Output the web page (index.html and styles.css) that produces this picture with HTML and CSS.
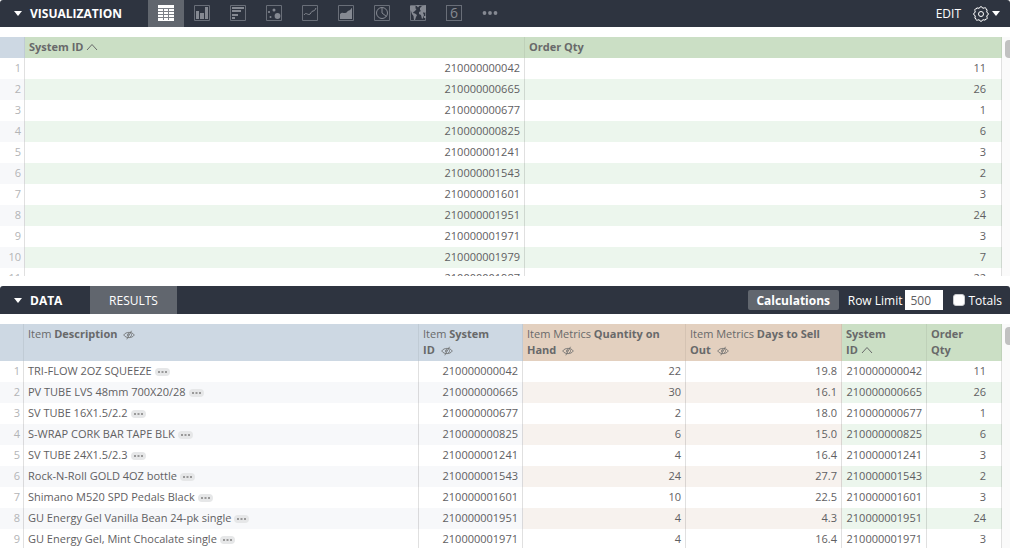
FILE: index.html
```html
<!DOCTYPE html>
<html lang="en">
<head>
    <meta charset="UTF-8">
    <meta name="viewport" content="width=device-width, initial-scale=1.0">
    <title>Explore</title>
    <link rel="stylesheet" href="styles.css">
</head>
<body>
    <svg class="defs" width="0" height="0">
        <symbol id="caret" viewBox="0 0 8 5"><path d="M0 0h8L4 5z" fill="currentColor"/></symbol>
        <symbol id="sort" viewBox="0 0 12 8"><path d="M1 7l5-5.500 5 5.500" fill="none" stroke="currentColor"/></symbol>
        <symbol id="hidden" viewBox="0 0 12 10">
            <path d="M.7 5C3 1.500 9 1.500 11.300 5C9 8.500 3 8.500.7 5z" fill="none" stroke="currentColor" stroke-width=".8"/>
            <path d="M6 3a2 2 0 0 0-1 3.600z" fill="currentColor"/>
            <path d="M8.500.8L3.800 9.300M8 3.500a2.200 2.200 0 0 1-1 3.500" fill="none" stroke="currentColor" stroke-width=".8"/>
        </symbol>
        <symbol id="dots" viewBox="0 0 15 8"><path d="M3 3h2v2H3zM6.500 3h2v2h-2zM10 3h2v2h-2z" fill="#999"/></symbol>
    </svg>

    <section class="panel visualization">
        <header class="bar">
            <button class="toggle"><svg class="caret"><use href="#caret"/></svg>VISUALIZATION</button>
            <nav class="chart-types">
                <button class="chart active" aria-label="Table">
                    <svg viewBox="0 0 16 16"><path d="M0 0h16v16H0z" fill="#fff"/><path d="M0 3.500h16M0 6.500h16M0 9.500h16M0 12.500h16" stroke="#7c8087"/><path d="M5.500 3v12M10.500 3v12" stroke="#7c8087"/></svg>
                </button>
                <button class="chart" aria-label="Column">
                    <svg viewBox="0 0 16 16"><path class="frame" d="M.5.5h15v15H.5z"/><path d="M2 6h3v8H2zM6 8h4v6H6zM11 2h3v12h-3z"/></svg>
                </button>
                <button class="chart" aria-label="Bar">
                    <svg viewBox="0 0 16 16"><path class="frame" d="M.5.5h15v15H.5z"/><path d="M2 2h12v2H2zM2 5h9v2H2zM2 9h6v2H2zM2 12h3v2H2z"/></svg>
                </button>
                <button class="chart" aria-label="Scatter">
                    <svg viewBox="0 0 16 16"><path class="frame" d="M.5.5h15v15H.5z"/><circle cx="11.500" cy="11" r="2.900"/><circle cx="8" cy="5" r="1.500"/><circle cx="3" cy="7" r="1.100"/><circle cx="4.500" cy="12" r="1"/></svg>
                </button>
                <button class="chart" aria-label="Line">
                    <svg viewBox="0 0 16 16"><path class="frame" d="M.5.5h15v15H.5z"/><path class="line" d="M2 10C4 7 5 9.500 7 9.500S9 6 11 6s2-1.500 3-3"/></svg>
                </button>
                <button class="chart" aria-label="Area">
                    <svg viewBox="0 0 16 16"><path class="frame" d="M.5.5h15v15H.5z"/><path d="M2 14V9c2-2 3-1 5-1s2-2 4-2.500S13 3 14 3v11z"/></svg>
                </button>
                <button class="chart" aria-label="Pie">
                    <svg viewBox="0 0 16 16"><path class="frame" d="M.5.5h15v15H.5z"/><circle class="line" cx="8" cy="8" r="5.500"/><path class="line" d="M8 2.500V8l4.500 3.500"/></svg>
                </button>
                <button class="chart" aria-label="Map">
                    <svg viewBox="0 0 16 16"><path class="frame" d="M.5.500h15v15H.5z"/><path d="M0 1h5l1 1-1 1 1.500 1L5 6 3.500 7 3 8l2 .5 2 1.500-1 2-1 3H4l-.5-4L2 9 1 6 0 5zM6 0h4L8 2.500zM10 3l2-2 4-1v7l-1.500 1L14 7l-1 1 1 2-1 3-1 1-1-4-2-1V7l2-1-1-1z"/><path d="M14 11h2v2h-2z"/></svg>
                </button>
                <button class="chart" aria-label="Single value"><span class="single">6</span></button>
                <button class="chart" aria-label="More">
                    <svg viewBox="0 0 16 16"><circle cx="2.500" cy="8" r="1.900"/><circle cx="8" cy="8" r="1.900"/><circle cx="13.500" cy="8" r="1.900"/></svg>
                </button>
            </nav>
            <div class="actions">
                <button class="edit">EDIT</button>
                <button class="settings" aria-label="Settings">
                    <svg class="gear" viewBox="0 0 16 16"><path d="M6.200 2.300Q8-1.200 9.800 2.300Q13.600 1 13 3.200Q14.900 3 13.700 6.200Q17.200 8 13.700 9.800Q15 13.600 12.800 13Q13 14.900 9.800 13.700Q8 17.200 6.200 13.700Q2.400 15 3 12.800Q1.100 13 2.300 9.800Q-1.200 8 2.300 6.200Q1 2.400 3.200 3Q3 1.100 6.200 2.300z"/><circle cx="8" cy="8" r="2.500"/></svg>
                    <svg class="caret"><use href="#caret"/></svg>
                </button>
            </div>
        </header>
        <div class="scroller">
            <table class="grid">
                <colgroup><col class="col-viz-index"><col class="col-half"><col></colgroup>
                <thead>
                    <tr><th class="dimension"></th><th class="calc">System ID <svg class="sort"><use href="#sort"/></svg></th><th class="calc">Order Qty</th></tr>
                </thead>
                <tbody>
                    <tr><td class="index">1</td><td class="calc">210000000042</td><td class="calc qty">11</td></tr>
                    <tr><td class="index">2</td><td class="calc">210000000665</td><td class="calc qty">26</td></tr>
                    <tr><td class="index">3</td><td class="calc">210000000677</td><td class="calc qty">1</td></tr>
                    <tr><td class="index">4</td><td class="calc">210000000825</td><td class="calc qty">6</td></tr>
                    <tr><td class="index">5</td><td class="calc">210000001241</td><td class="calc qty">3</td></tr>
                    <tr><td class="index">6</td><td class="calc">210000001543</td><td class="calc qty">2</td></tr>
                    <tr><td class="index">7</td><td class="calc">210000001601</td><td class="calc qty">3</td></tr>
                    <tr><td class="index">8</td><td class="calc">210000001951</td><td class="calc qty">24</td></tr>
                    <tr><td class="index">9</td><td class="calc">210000001971</td><td class="calc qty">3</td></tr>
                    <tr><td class="index">10</td><td class="calc">210000001979</td><td class="calc qty">7</td></tr>
                    <tr><td class="index">11</td><td class="calc">210000001987</td><td class="calc qty">22</td></tr>
                </tbody>
            </table>
            <div class="track"><div class="thumb"></div></div>
        </div>
    </section>

    <section class="panel data">
        <header class="bar">
            <button class="toggle"><svg class="caret"><use href="#caret"/></svg>DATA</button>
            <button class="tab">RESULTS</button>
            <div class="actions">
                <button class="calculations">Calculations</button>
                <label class="limit" for="row-limit">Row Limit</label>
                <input class="limit-box" type="text" id="row-limit" value="500">
                <input class="check" type="checkbox" id="totals">
                <label for="totals">Totals</label>
            </div>
        </header>
        <div class="scroller">
            <table class="grid">
                <colgroup><col class="col-index"><col><col class="col-id"><col class="col-hand"><col class="col-days"><col class="col-calc-id"><col class="col-qty"></colgroup>
                <thead>
                    <tr>
                        <th class="dimension"></th>
                        <th class="dimension"><span>Item</span> Description <svg class="hidden"><use href="#hidden"/></svg></th>
                        <th class="dimension"><span>Item</span> System<br>ID <svg class="hidden"><use href="#hidden"/></svg></th>
                        <th class="measure"><span>Item Metrics</span> Quantity on Hand <svg class="hidden"><use href="#hidden"/></svg></th>
                        <th class="measure"><span>Item Metrics</span> Days to Sell Out <svg class="hidden"><use href="#hidden"/></svg></th>
                        <th class="calc">System<br>ID <svg class="sort"><use href="#sort"/></svg></th>
                        <th class="calc">Order<br>Qty</th>
                    </tr>
                </thead>
                <tbody>
                    <tr><td class="index">1</td><td class="text">TRI-FLOW 2OZ SQUEEZE<button class="more" aria-label="More"><svg><use href="#dots"/></svg></button></td><td>210000000042</td><td class="measure">22</td><td class="measure">19.8</td><td class="calc">210000000042</td><td class="calc qty">11</td></tr>
                    <tr><td class="index">2</td><td class="text">PV TUBE LVS 48mm 700X20/28<button class="more" aria-label="More"><svg><use href="#dots"/></svg></button></td><td>210000000665</td><td class="measure">30</td><td class="measure">16.1</td><td class="calc">210000000665</td><td class="calc qty">26</td></tr>
                    <tr><td class="index">3</td><td class="text">SV TUBE 16X1.5/2.2<button class="more" aria-label="More"><svg><use href="#dots"/></svg></button></td><td>210000000677</td><td class="measure">2</td><td class="measure">18.0</td><td class="calc">210000000677</td><td class="calc qty">1</td></tr>
                    <tr><td class="index">4</td><td class="text">S-WRAP CORK BAR TAPE BLK<button class="more" aria-label="More"><svg><use href="#dots"/></svg></button></td><td>210000000825</td><td class="measure">6</td><td class="measure">15.0</td><td class="calc">210000000825</td><td class="calc qty">6</td></tr>
                    <tr><td class="index">5</td><td class="text">SV TUBE 24X1.5/2.3<button class="more" aria-label="More"><svg><use href="#dots"/></svg></button></td><td>210000001241</td><td class="measure">4</td><td class="measure">16.4</td><td class="calc">210000001241</td><td class="calc qty">3</td></tr>
                    <tr><td class="index">6</td><td class="text">Rock-N-Roll GOLD 4OZ bottle<button class="more" aria-label="More"><svg><use href="#dots"/></svg></button></td><td>210000001543</td><td class="measure">24</td><td class="measure">27.7</td><td class="calc">210000001543</td><td class="calc qty">2</td></tr>
                    <tr><td class="index">7</td><td class="text">Shimano M520 SPD Pedals Black<button class="more" aria-label="More"><svg><use href="#dots"/></svg></button></td><td>210000001601</td><td class="measure">10</td><td class="measure">22.5</td><td class="calc">210000001601</td><td class="calc qty">3</td></tr>
                    <tr><td class="index">8</td><td class="text">GU Energy Gel Vanilla Bean 24-pk single<button class="more" aria-label="More"><svg><use href="#dots"/></svg></button></td><td>210000001951</td><td class="measure">4</td><td class="measure">4.3</td><td class="calc">210000001951</td><td class="calc qty">24</td></tr>
                    <tr><td class="index">9</td><td class="text">GU Energy Gel, Mint Chocalate single<button class="more" aria-label="More"><svg><use href="#dots"/></svg></button></td><td>210000001971</td><td class="measure">4</td><td class="measure">16.4</td><td class="calc">210000001971</td><td class="calc qty">3</td></tr>
                </tbody>
            </table>
            <div class="track"><div class="thumb"></div></div>
        </div>
    </section>
</body>
</html>
```
FILE: styles.css
```css
* {
    box-sizing: border-box;
}
body {
    margin: 0;
    height: 100vh;
    overflow: hidden;
    display: flex;
    flex-direction: column;
    gap: 10px;
    background: #fff;
    color: #5f6062;
    font-family: "Open Sans", sans-serif;
    font-size: 11px;
}
button {
    padding: 0;
    border: none;
    background: none;
    color: inherit;
    font: inherit;
    cursor: pointer;
}
.defs {
    position: absolute;
}
.panel {
    display: flex;
    flex-direction: column;
    gap: 10px;
    min-height: 0;
}
.visualization {
    flex: none;
    height: 276px;
}
.data {
    flex: 1;
}

/* dark title bars */
.bar {
    flex: none;
    display: flex;
    height: 28px;
    background: #2e3440;
    color: #fff;
    font-size: 12px;
    border-radius: 3px 3px 0 0;
}
.visualization .bar {
    height: 27px;
}
.toggle {
    display: flex;
    align-items: center;
    gap: 8px;
    width: 90px;
    padding-left: 14px;
    font-weight: bold;
}
.visualization .toggle {
    width: 148px;
}
.caret {
    width: 8px;
    height: 5px;
}
.chart-types {
    display: flex;
}
.chart {
    display: flex;
    align-items: center;
    justify-content: center;
    width: 36px;
    padding-bottom: 1px;
    color: #858992;
}
.chart svg {
    width: 16px;
    height: 16px;
    fill: #858992;
}
.chart .frame {
    fill: none;
    stroke: #696e78;
}
.chart .line {
    fill: none;
    stroke: #858992;
}
.active,
.tab {
    background: #61666e;
}
.single {
    width: 16px;
    height: 16px;
    border: 1px solid #696e78;
    font-size: 14px;
    line-height: 14px;
}
.tab {
    width: 87px;
}
.actions {
    display: flex;
    align-items: center;
    margin-left: auto;
    padding-right: 8px;
}
.settings {
    display: flex;
    align-items: center;
    gap: 3px;
    margin-left: 12px;
}
.visualization .actions {
    padding-right: 10px;
}
.gear {
    width: 16px;
    height: 16px;
    fill: none;
    stroke: #fff;
}
.calculations {
    width: 91px;
    height: 20px;
    margin-right: 9px;
    border-radius: 2px;
    background: #61666e;
    font-weight: bold;
}
.limit-box {
    width: 38px;
    height: 20px;
    margin: 0 10px 0 3px;
    padding: 0 5px;
    border: none;
    color: #5f6062;
    font: inherit;
}
.check {
    appearance: none;
    width: 12px;
    height: 12px;
    margin: 0 3px 0 0;
    border: 1px solid #c9cbce;
    border-radius: 3px;
    background: #fff;
}
.check:checked {
    background: #6c9fd8;
}

/* result tables */
.scroller {
    display: flex;
    align-items: flex-start;
    flex: 1;
    min-height: 0;
    overflow: hidden;
}
.grid {
    flex: 1;
    width: 100%;
    table-layout: fixed;
    border-collapse: separate;
    border-spacing: 0;
}
.col-viz-index { width: 25px; }
.col-half { width: calc(50% - 1px); }
.col-viz-index + .col-half { width: 500px; }
.col-index { width: 24px; }
.col-id { width: 104px; }
.col-hand { width: 163px; }
.col-days { width: 156px; }
.col-calc-id { width: 85px; }
.col-qty { width: 75px; }
th {
    padding: 2px 4px 3px;
    border-right: 1px solid rgba(0, 0, 0, 0.06);
    line-height: 16px;
    text-align: left;
    vertical-align: top;
    color: #68696a;
}
th span {
    font-weight: normal;
}
th.dimension {
    background: #cdd8e3;
}
th.measure {
    background: #e3d0bf;
}
th.calc {
    background: #cbdfc5;
}
td {
    height: 21px;
    padding: 0 4px 1px;
    border-right: 1px solid rgba(0, 0, 0, 0.12);
    line-height: 18px;
    text-align: right;
    white-space: nowrap;
}
tr:nth-child(even) td {
    background: #f7f8fa;
}
tr:nth-child(even) td.measure {
    background: #f7f2ee;
}
tr:nth-child(even) td.calc {
    background: #ecf6ed;
}
td.index {
    padding-right: 3px;
    padding-left: 0;
    color: #b3b4b6;
}
td.text {
    text-align: left;
}
td.qty {
    padding-right: 15px;
}
.sort {
    width: 12px;
    height: 8px;
}
.hidden {
    width: 12px;
    height: 10px;
    margin-left: 3px;
    vertical-align: -2px;
}
.more {
    width: 15px;
    height: 8px;
    margin-left: 3px;
    border-radius: 4px;
    background: #e6e7e8;
    vertical-align: -1px;
}
.more svg {
    display: block;
    width: 15px;
    height: 8px;
}
.track {
    flex: none;
    align-self: stretch;
    width: 8px;
    padding: 3px 0 0 3px;
    background: #fafafa;
}
.thumb {
    height: 18px;
    border-radius: 4px 0 0 4px;
    background: #c1c1c1;
}
```
